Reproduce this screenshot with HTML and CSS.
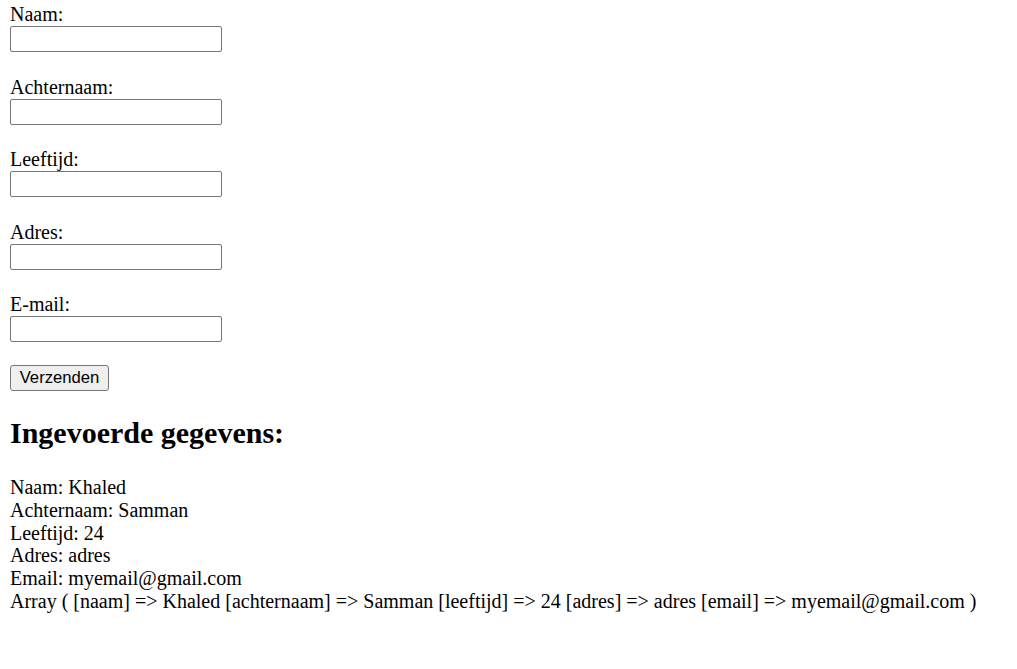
FILE: index.html
```html
<!DOCTYPE html>
<html lang="nl">
<head>
<meta charset="utf-8">
<title>Formulier</title>
<link rel="stylesheet" href="styles.css">
</head>
<body>
<form class="form">
  <div class="field">
    <label class="label" for="naam">Naam:</label>
    <input class="input" type="text" id="naam">
  </div>
  <div class="field">
    <label class="label" for="achternaam">Achternaam:</label>
    <input class="input" type="text" id="achternaam">
  </div>
  <div class="field">
    <label class="label" for="leeftijd">Leeftijd:</label>
    <input class="input" type="text" id="leeftijd">
  </div>
  <div class="field">
    <label class="label" for="adres">Adres:</label>
    <input class="input" type="text" id="adres">
  </div>
  <div class="field field-last">
    <label class="label" for="email">E-mail:</label>
    <input class="input" type="text" id="email">
  </div>
  <button class="button" type="button">Verzenden</button>
</form>
<h2 class="heading">Ingevoerde gegevens:</h2>
<div class="output">
  <div>Naam: Khaled</div>
  <div>Achternaam: Samman</div>
  <div>Leeftijd: 24</div>
  <div>Adres: adres</div>
  <div>Email: myemail@gmail.com</div>
  <div>Array ( [naam] =&gt; Khaled [achternaam] =&gt; Samman [leeftijd] =&gt; 24 [adres] =&gt; adres [email] =&gt; myemail@gmail.com )</div>
</div>
</body>
</html>
```
FILE: styles.css
```css
html, body {
  margin: 0;
  background: #ffffff;
}
body {
  padding: 3px 10px 0 10px;
  font-family: "Liberation Serif", "Times New Roman", serif;
  font-size: 20px;
  line-height: 23px;
  color: #000000;
}
.form {
  margin: 0;
  display: flex;
  flex-direction: column;
  align-items: flex-start;
}
.field {
  display: flex;
  flex-direction: column;
  align-items: flex-start;
  margin-bottom: 23.5px;
}
.field-last {
  margin-bottom: 22.5px;
}
.label {
  display: block;
  height: 23px;
}
.input {
  box-sizing: border-box;
  width: 212px;
  height: 26px;
  margin: 0;
  padding: 1px 2px;
  border: 1px solid #767676;
  border-radius: 2px;
  background: #ffffff;
  font-family: "Liberation Sans", Arial, sans-serif;
  font-size: 16.67px;
}
.button {
  box-sizing: border-box;
  width: 99px;
  height: 26px;
  margin: 0;
  padding: 0;
  border: 1px solid #767676;
  border-radius: 3px;
  background: #efefef;
  color: #000000;
  font-family: "Liberation Sans", Arial, sans-serif;
  font-size: 16.67px;
  line-height: 22px;
  text-align: center;
}
.heading {
  margin: 25px 0 26px 0;
  font-size: 30px;
  line-height: 34.5px;
  font-weight: bold;
}
.output {
  line-height: 22.8px;
}
```
